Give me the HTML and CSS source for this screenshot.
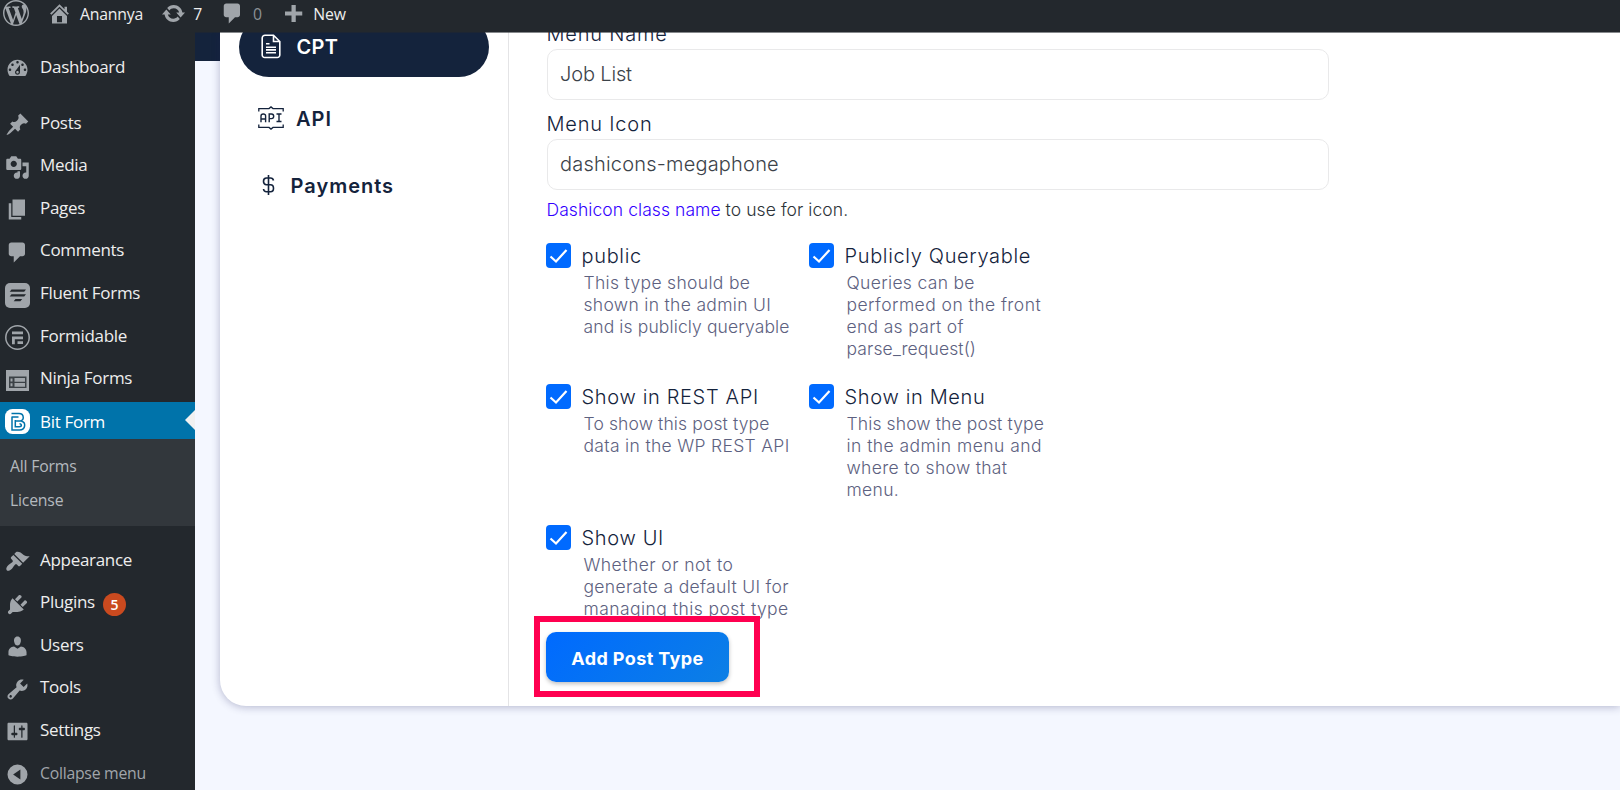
FILE: index.html
```html
<!DOCTYPE html>
<html lang="en">
<head>
<meta charset="utf-8">
<title>Bit Form</title>
<link rel="stylesheet" href="styles.css">
</head>
<body>
<header class="adminbar">
  <svg class="bar-logo" viewBox="0 0 20 20"><path d="M20 10c0-5.51-4.49-10-10-10C4.48 0 0 4.49 0 10c0 5.52 4.48 10 10 10 5.51 0 10-4.48 10-10zM7.78 15.37L4.37 6.22c.55-.02 1.17-.08 1.17-.08.5-.06.44-1.13-.06-1.11 0 0-1.45.11-2.37.11-.18 0-.37 0-.58-.01C4.12 2.69 6.87 1.11 10 1.11c2.33 0 4.45.87 6.05 2.34-.68-.11-1.65.39-1.65 1.58 0 .74.45 1.36.9 2.1.35.61.55 1.36.55 2.46 0 1.49-1.4 5-1.4 5l-3.03-8.37c.54-.02.82-.17.82-.17.5-.05.44-1.25-.06-1.22 0 0-1.44.12-2.38.12-.87 0-2.33-.12-2.33-.12-.5-.03-.56 1.2-.06 1.22l.92.08 1.26 3.41zM17.41 10c.24-.64.74-1.87.43-4.25.7 1.29 1.05 2.71 1.05 4.25 0 3.29-1.73 6.24-4.4 7.78.97-2.59 1.94-5.2 2.92-7.78zM6.1 18.09C3.12 16.65 1.11 13.53 1.11 10c0-1.3.23-2.48.72-3.59C3.25 10.3 4.67 14.2 6.1 18.09zm4.03-6.63l2.58 6.98c-.86.29-1.76.45-2.71.45-.79 0-1.57-.11-2.29-.33.81-2.38 1.62-4.74 2.42-7.1z"/></svg>
  <div class="bar-item bar-site"><svg viewBox="0 0 20 20"><path d="M16 8.5l1.53 1.53-1.06 1.06L10 4.6l-6.47 6.49-1.06-1.06L10 2.5l4 4v-2h2v4zm-6-2.46l6 5.99V18H4v-5.97zM12 17v-5H8v5h4z"/></svg><span>Anannya</span></div>
  <div class="bar-item bar-updates"><svg viewBox="0 0 20 20"><path d="M10.2 3.28c3.53 0 6.43 2.61 6.92 6h2.08l-3.5 4-3.5-4h2.32c-.45-1.97-2.21-3.45-4.32-3.45-1.45 0-2.73.71-3.54 1.78L4.95 5.66C6.23 4.2 8.11 3.28 10.2 3.28zm-.4 13.44c-3.52 0-6.43-2.61-6.92-6H.8l3.5-4c1.17 1.33 2.33 2.67 3.5 4H5.48c.45 1.97 2.21 3.45 4.32 3.45 1.45 0 2.73-.71 3.54-1.78l1.71 1.95c-1.28 1.46-3.15 2.38-5.25 2.38z"/></svg><span>7</span></div>
  <div class="bar-item bar-comments"><svg viewBox="0 0 20 20"><path d="M5 2h9c1.1 0 2 .9 2 2v7c0 1.1-.9 2-2 2h-2l-5 5v-5H5c-1.1 0-2-.9-2-2V4c0-1.1.9-2 2-2z"/></svg><span class="dim">0</span></div>
  <div class="bar-item bar-new"><svg viewBox="0 0 20 20"><path d="M17 8.4v3.2h-5.2v5.2H8.4v-5.2H3.2V8.4h5.2V3.2h3.4v5.2z"/></svg><span>New</span></div>
</header>
<div class="layout">
  <nav class="sidebar">
    <a class="item first"><svg viewBox="0 0 20 20"><path fill-rule="evenodd" d="M3.76 16h12.48c1.1-1.37 1.76-3.11 1.76-5 0-4.42-3.58-8-8-8s-8 3.58-8 8c0 1.89.66 3.63 1.76 5zM10 4c.55 0 1 .45 1 1s-.45 1-1 1-1-.45-1-1 .45-1 1-1zM6 6c.55 0 1 .45 1 1s-.45 1-1 1-1-.45-1-1 .45-1 1-1zm8 0c.55 0 1 .45 1 1s-.45 1-1 1-1-.45-1-1 .45-1 1-1zm-5.37 5.55L12 7v6c0 1.1-.9 2-2 2s-2-.9-2-2c0-.57.24-1.08.63-1.45zM4 10c.55 0 1 .45 1 1s-.45 1-1 1-1-.45-1-1 .45-1 1-1zm12 0c.55 0 1 .45 1 1s-.45 1-1 1-1-.45-1-1 .45-1 1-1zm-5 3c0-.55-.45-1-1-1s-1 .45-1 1 .45 1 1 1 1-.45 1-1z"/></svg><span>Dashboard</span></a>
    <a class="item posts"><svg viewBox="0 0 20 20"><path d="M10.44 3.02l1.82-1.82 6.36 6.35-1.83 1.82c-1.05-.68-2.48-.57-3.41.36l-.75.75c-.92.93-1.04 2.35-.35 3.41l-1.83 1.82-2.41-2.41-2.8 2.79c-.42.42-3.38 2.71-3.8 2.29s1.86-3.39 2.28-3.81l2.79-2.79L4.1 9.36l1.83-1.82c1.05.69 2.48.57 3.4-.36l.75-.75c.93-.92 1.05-2.35.36-3.41z"/></svg><span>Posts</span></a>
    <a class="item"><svg viewBox="0 0 20 20"><path d="M13 11V4c0-.55-.45-1-1-1h-1.67L9 1H5L3.67 3H2c-.55 0-1 .45-1 1v7c0 .55.45 1 1 1h10c.55 0 1-.45 1-1zM7 4.5c1.38 0 2.5 1.12 2.5 2.5S8.38 9.5 7 9.5 4.5 8.38 4.5 7 5.62 4.5 7 4.5zM14 6h5v10.5c0 1.38-1.12 2.5-2.5 2.5S14 17.88 14 16.5s1.12-2.5 2.5-2.5c.17 0 .34.02.5.05V9h-3V6zm-4 8.05V13h2v3.5c0 1.38-1.12 2.5-2.5 2.5S7 17.88 7 16.5 8.12 14 9.5 14c.17 0 .34.02.5.05z"/></svg><span>Media</span></a>
    <a class="item"><svg viewBox="0 0 20 20"><path d="M6 15V2h10v13H6zm-1 1h8v2H3V5h2v11z"/></svg><span>Pages</span></a>
    <a class="item"><svg viewBox="0 0 20 20"><path d="M5 2h9c1.1 0 2 .9 2 2v7c0 1.1-.9 2-2 2h-2l-5 5v-5H5c-1.1 0-2-.9-2-2V4c0-1.1.9-2 2-2z"/></svg><span>Comments</span></a>
    <a class="item"><svg viewBox="0 0 25 25"><rect width="25" height="25" rx="5"/><g fill="#23282d"><path d="M6.500 6.500H21l-1.800 2.300H4.700zM6.500 11.300H21l-1.800 2.300H4.700zM10.500 16h6.700l-1.800 2.300H8.700z"/></g></svg><span>Fluent Forms</span></a>
    <a class="item"><svg viewBox="0 0 25 25"><circle cx="12.500" cy="12.500" r="11.700" fill="none" stroke="#a0a5aa" stroke-width="1.500"/><path d="M7 6.500h11v2.800H7zM7 11.500h11v2.700h-8.200v5H7zM12.500 16.200H18v2.800h-5.500z"/></svg><span>Formidable</span></a>
    <a class="item"><svg viewBox="0 0 25 25"><path d="M1 2h23v21H1z"/><path fill="#3b4146" d="M4 8.500h17.500V20H4z"/><path d="M9.500 10h10.500v3.700H9.500zM9.500 15h10.500v3.700H9.500zM5.500 10.500h2v3h-2zM5.500 15.300h2v3h-2z"/></svg><span>Ninja Forms</span></a>
    <a class="item active"><svg viewBox="0 0 25 25"><rect width="25" height="25" rx="7.500" fill="#fff"/><g fill="none" stroke="#0073aa" stroke-width="1.500"><path d="M6.500 4.500h7.500c5.500 0 5.500 7.500 1 7.500h-4M6.500 8h7M7 8v13h7.500c6.500 0 6.500-8 2-8.800M10.300 11v6.800h4c2.700 0 2.700-3 .2-3"/></g></svg><span>Bit Form</span></a>
    <div class="submenu"><a>All Forms</a><a>License</a></div>
    <a class="item appearance"><svg viewBox="0 0 20 20"><path d="M14.48 11.06L7.41 3.99l1.5-1.5c.5-.56 2.3-.47 3.51.32 1.21.8 1.43 1.28 2.910 2.1 1.18.64 2.450 1.260 4.450.85zm-.71.71L6.700 4.700 4.930 6.470c-.39.39-.39 1.020 0 1.410l1.060 1.060c.39.39.39 1.030 0 1.420-.6.600-1.430 1.110-2.210 1.690-.35.260-.7.530-1.010.84C1.430 14.230.4 16.080 1.400 17.070c.99 1 2.840-.03 4.180-1.360.31-.31.58-.66.85-1.020.57-.78 1.080-1.610 1.690-2.210.39-.39 1.020-.39 1.410 0l1.060 1.060c.39.39 1.020.39 1.410 0z"/></svg><span>Appearance</span></a>
    <a class="item"><svg viewBox="0 0 20 20"><path d="M13.11 4.36L9.87 7.6 8 5.73l3.24-3.24c.35-.34 1.05-.2 1.56.32.52.51.66 1.21.31 1.55zm-8 1.77l.91-1.12 9.01 9.01-1.19.84c-.71.71-2.63 1.16-3.82 1.16H6.14L4.9 17.26c-.59.59-1.54.59-2.12 0-.59-.58-.59-1.53 0-2.12l1.24-1.24v-3.88c0-1.13.4-3.19 1.09-3.89zm7.26 3.97l3.24-3.24c.34-.35 1.04-.21 1.55.31.52.51.66 1.21.31 1.55l-3.24 3.25z"/></svg><span>Plugins</span><b class="count">5</b></a>
    <a class="item"><svg viewBox="0 0 20 20"><path d="M10 9.25c-2.27 0-2.73-3.44-2.73-3.44C7 4.02 7.82 2 9.97 2c2.16 0 2.98 2.02 2.71 3.81 0 0-.41 3.44-2.68 3.44zm0 2.57L12.72 10c2.39 0 4.52 2.33 4.52 4.53v2.49s-3.65 1.13-7.24 1.13c-3.65 0-7.24-1.13-7.24-1.13v-2.49c0-2.25 1.94-4.48 4.47-4.48z"/></svg><span>Users</span></a>
    <a class="item"><svg viewBox="0 0 20 20"><path d="M16.68 9.77c-1.34 1.34-3.3 1.67-4.95.99l-5.41 6.52c-.99.99-2.59.99-3.58 0s-.99-2.59 0-3.57l6.52-5.42c-.68-1.65-.35-3.61.99-4.95 1.28-1.28 3.12-1.62 4.72-1.06l-2.89 2.89 2.82 2.82 2.86-2.87c.53 1.58.18 3.39-1.08 4.65zM3.81 16.21c.4.39 1.04.39 1.43 0 .4-.4.4-1.04 0-1.43-.39-.4-1.03-.4-1.43 0-.39.39-.39 1.03 0 1.43z"/></svg><span>Tools</span></a>
    <a class="item"><svg viewBox="0 0 20 20"><path d="M18 16V4c0-.55-.45-1-1-1H3c-.55 0-1 .45-1 1v12c0 .55.45 1 1 1h14c.55 0 1-.45 1-1zM8 11h1c.55 0 1 .45 1 1s-.45 1-1 1H8v1.5c0 .28-.22.5-.5.5s-.5-.22-.5-.5V13H6c-.55 0-1-.45-1-1s.45-1 1-1h1V5.500c0-.28.22-.5.5-.5s.5.220.5.5V11zm5-2h-1c-.55 0-1-.45-1-1s.45-1 1-1h1V5.500c0-.28.220-.5.500-.5s.5.220.5.5V7h1c.55 0 1 .45 1 1s-.45 1-1 1h-1v5.500c0 .28-.22.5-.5.5s-.5-.22-.5-.5V9z"/></svg><span>Settings</span></a>
    <a class="item collapse"><svg viewBox="0 0 20 20"><path fill-rule="evenodd" d="M10 2a8 8 0 1 1 0 16 8 8 0 0 1 0-16zM12.300 6v8L6.500 10z"/></svg><span>Collapse menu</span></a>
  </nav>
  <main class="main">
    <section class="card">
      <aside class="tabs">
        <a class="tab on"><svg class="doc" viewBox="0 0 20 25"><path d="M4 1.200h8.500L18.800 7.500V21a2.500 2.500 0 0 1-2.500 2.500H3.700A2.500 2.500 0 0 1 1.200 21V4A2.800 2.800 0 0 1 4 1.200zM12.500 1.500v6h6M5 9.700h3.500M5 13.200h10M5 15.900h10M5 18.700h10"/></svg><span>CPT</span></a>
        <a class="tab api"><svg class="apii" viewBox="0 0 26 24"><g stroke-width="1.300"><path d="M.8 5.500V2.600H11L13 .9l2 1.700h10.200v2.900M.8 18.500v2.900H11l2 1.700 2-1.700h10.200v-2.900"/><path stroke-width="1.400" d="M3 16.200V10q0-2 2.300-2T7.600 10v6.200M3 13h4.600M11.200 16.200V8h2.300q2.200 0 2.200 2.300t-2.200 2.300h-2.300M18.500 8h5M21 8v7.500M18.500 15.500h5"/></g></svg><span>API</span></a>
        <a class="tab pay"><svg class="dollar" viewBox="0 0 12 20"><path d="M6 0v20M11 5.500Q10.500 3 8 3H4Q1 3 1 6.300T4 9.700h4q3 0 3 3.500T8 16.700H4Q1.300 16.700 1 14"/></svg><span>Payments</span></a>
      </aside>
      <form class="form">
        <div class="label">Menu Name</div>
        <div class="input job">Job List</div>
        <div class="label">Menu Icon</div>
        <div class="input">dashicons-megaphone</div>
        <div class="hint"><a>Dashicon class name</a> to use for icon.</div>
        <div class="options">
          <div class="opt"><i class="check"><svg viewBox="0 0 25 25"><path d="M4.500 13.500l5.500 5L20.500 7"/></svg></i><div><div class="opt-name">public</div><p>This type should be<br>shown in the admin UI<br><span class="snug">and is publicly queryable</span></p></div></div>
          <div class="opt"><i class="check"><svg viewBox="0 0 25 25"><path d="M4.500 13.500l5.500 5L20.500 7"/></svg></i><div><div class="opt-name">Publicly Queryable</div><p>Queries can be<br><span class="wide">performed on the front</span><br>end as part of<br><span class="snug">parse_request()</span></p></div></div>
          <div class="opt"><i class="check"><svg viewBox="0 0 25 25"><path d="M4.500 13.500l5.500 5L20.500 7"/></svg></i><div><div class="opt-name">Show in REST API</div><p><span class="snug">To show this post type</span><br>data in the WP REST API</p></div></div>
          <div class="opt"><i class="check"><svg viewBox="0 0 25 25"><path d="M4.500 13.500l5.500 5L20.500 7"/></svg></i><div><div class="opt-name">Show in Menu</div><p><span class="snug">This show the post type</span><br><span class="wide">in the admin menu and</span><br>where to show that<br>menu.</p></div></div>
          <div class="opt"><i class="check"><svg viewBox="0 0 25 25"><path d="M4.500 13.500l5.500 5L20.500 7"/></svg></i><div><div class="opt-name">Show UI</div><p><span class="wide">Whether or not to</span><br>generate a default UI for<br><span class="wide">managing this post type</span></p></div></div>
        </div>
        <div class="highlight"><button type="button" class="submit">Add Post Type</button></div>
      </form>
    </section>
  </main>
</div>
</body>
</html>
```
FILE: styles.css
```css
* { box-sizing: border-box; }
body { margin: 0; height: 790px; overflow: hidden; background: #f4f7ff; display: flex; flex-direction: column; }

.adminbar { height: 32px; flex: none; background: #23282d; box-shadow: 0 1px rgba(35, 40, 45, .55); position: relative; z-index: 3; display: flex; align-items: flex-start; padding-left: 3px; font: 15.8px/28px "Open Sans", "Noto Sans", sans-serif; letter-spacing: -.2px; color: #eee; }
.adminbar svg { fill: #a0a5aa; width: 25px; height: 25px; flex: none; }
.adminbar .bar-logo { width: 26px; height: 26px; }
.bar-item { display: flex; }
.bar-item svg { margin-top: 1px; }
.bar-site { margin-left: 18px; }
.bar-site span { margin-left: 8px; }
.bar-updates { margin-left: 18px; }
.bar-updates span { margin-left: 7px; }
.bar-comments { margin-left: 18px; }
.bar-comments span { margin-left: 8px; color: #8c9196; }
.bar-new { margin-left: 19px; }
.bar-new span { margin-left: 7.500px; }

.layout { flex: 1; min-height: 0; display: flex; }
.sidebar { width: 195px; flex: none; background: #23282d; padding-top: 13.700px; overflow: hidden; position: relative; z-index: 2; }
.item { display: flex; height: 42.600px; padding-left: 5px; color: #eee; font: 17px/42px "Open Sans", "Noto Sans", sans-serif; letter-spacing: -.3px; }
.item svg { width: 25px; height: 25px; margin: 10.500px 10px 0 0; fill: #a0a5aa; flex: none; }
.posts { margin-top: 13.400px; }
.active { margin-top: 1.800px; height: 37.700px; background: #0073aa; color: #fff; line-height: 40px; position: relative; }
.active svg { margin-top: 7.500px; }
.active::after { content: ""; position: absolute; right: 0; top: 8px; border: 10px solid transparent; border-right-color: #f1f1f1; border-left: 0; }
.submenu { height: 87px; background: #32373c; padding: 10px 0 0 10px; display: flex; flex-direction: column; }
.submenu a { font: 15.800px/34px "Open Sans", "Noto Sans", sans-serif; color: #b4b9be; letter-spacing: -.2px; }
.appearance { margin-top: 12.300px; }
.count { width: 23px; height: 23px; border-radius: 50%; background: #ca4a1f; color: #fff; margin: 12px 0 0 8px; font: 600 14px/23px "Open Sans", sans-serif; text-align: center; letter-spacing: 0; }
.collapse { font-size: 15.800px; color: #a0a5aa; letter-spacing: -.25px; }

.main { flex: 1; min-width: 0; padding-left: 25px; background: linear-gradient(#14233c 0 29.500px, #f4f7ff 29.500px); overflow: hidden; }
.card { height: 674px; background: #fff; border-bottom-left-radius: 26px; box-shadow: 0 1px 9px rgba(30, 30, 90, .3); display: flex; }
.tabs { width: 289px; flex: none; border-right: 1px solid #e4e4e6; padding-left: 19px; }
.tab { display: flex; align-items: center; color: #14233c; font: 600 20px/24px Inter, sans-serif; letter-spacing: 1px; }
.tab svg { fill: none; stroke: currentColor; flex: none; }
.tab span { margin-top: 1px; }
.on { width: 250px; height: 60px; margin-top: -15.500px; border-radius: 30px; background: #14233c; color: #fff; padding-left: 22px; letter-spacing: .3px; }
.doc { width: 20px; height: 25px; stroke-width: 1.600; margin-right: 15.500px; }
.api { height: 24px; margin-top: 29.500px; padding-left: 19px; }
.apii { width: 26px; height: 24px; margin-right: 12px; }
.pay { height: 24px; margin-top: 43px; padding-left: 22.500px; }
.dollar { width: 13px; height: 20px; stroke-width: 1.600; margin-right: 16px; }

.form { flex: 1; padding-left: 37.500px; font-family: Inter, sans-serif; font-weight: 300; }
.label { height: 39px; font-size: 20px; line-height: 48px; color: #14233c; letter-spacing: .8px; }
.label:first-child { margin-top: -21.800px; }
.input { width: 782px; height: 51px; margin-left: .5px; border: 1.500px solid #e9e9ea; border-radius: 10px; padding-left: 12px; font-size: 20px; line-height: 48px; color: #3c434a; letter-spacing: .2px; }
.job { letter-spacing: -.15px; }
.hint { height: 53px; font-size: 17.500px; line-height: 39px; color: #2c3338; letter-spacing: .07px; }
.hint a { color: #3300ff; }
.options { display: grid; grid-template-columns: 263px 263px; grid-template-rows: 141px 141px 106px; margin-left: -.5px; height: 388px; }
.opt { display: flex; }
.check { width: 25px; height: 25px; border-radius: 4px; background: #006aff; margin-right: 10.500px; flex: none; display: block; }
.check svg { display: block; fill: none; stroke: #fff; stroke-width: 2.200; }
.opt-name { font-size: 20px; line-height: 26px; color: #14233c; letter-spacing: .66px; white-space: nowrap; }
.opt p { margin: 3px 0 0 2px; font-size: 17.500px; line-height: 22px; color: #5d6180; letter-spacing: .32px; white-space: nowrap; }
.opt .snug { letter-spacing: .12px; }
.opt .wide { letter-spacing: .45px; }
.highlight { position: absolute; left: 534px; top: 615.500px; width: 225.500px; height: 81.500px; border: 6px solid #ff0050; padding: 10px 0 0 6px; }
.submit { display: block; width: 183px; height: 50px; border: 0; border-radius: 10px; background: linear-gradient(135deg, #006aff, #0c7fe5); box-shadow: 0 2px 4px rgba(0, 0, 0, .25); color: #fff; font: 700 18px/51px Inter, sans-serif; letter-spacing: .4px; padding: 1px 0 0; }
```
